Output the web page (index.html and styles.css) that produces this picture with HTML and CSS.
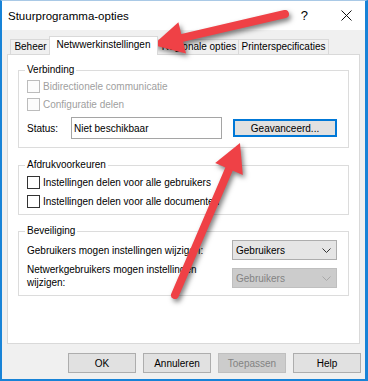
FILE: index.html
```html
<!DOCTYPE html>
<html>
<head>
<meta charset="utf-8">
<title>Stuurprogramma-opties</title>
<link rel="stylesheet" href="styles.css">
</head>
<body>

<div class="window">

  <div class="titlebar">
    <span class="caption">Stuurprogramma-opties</span>
    <span class="helpbtn">?</span>
    <span class="closebtn"><svg width="11" height="11" viewBox="0 0 11 11"><path d="M0.5 0.5L10.5 10.5M10.5 0.5L0.5 10.5"/></svg></span>
  </div>

  <div class="client">

    <div class="tabs">
      <div class="tab tab-beheer">Beheer</div>
      <div class="tab tab-netwerk active">Netwwerkinstellingen</div>
      <div class="tab tab-opties">Regionale opties</div>
      <div class="tab tab-printer">Printerspecificaties</div>
    </div>

    <div class="panel">

      <fieldset class="group group-verbinding">
        <legend>Verbinding</legend>
        <div class="check disabled"><span class="box"></span>Bidirectionele communicatie</div>
        <div class="check disabled"><span class="box"></span>Configuratie delen</div>
        <div class="status-row">
          <span class="status-label">Status:</span>
          <span class="edit">Niet beschikbaar</span>
          <span class="btn btn-default btn-adv">Geavanceerd...</span>
        </div>
      </fieldset>

      <fieldset class="group group-afdruk">
        <legend>Afdrukvoorkeuren</legend>
        <div class="check"><span class="box"></span>Instellingen delen voor alle gebruikers</div>
        <div class="check"><span class="box"></span>Instellingen delen voor alle documenten</div>
      </fieldset>

      <fieldset class="group group-beveiliging">
        <legend>Beveiliging</legend>
        <div class="sec-row">
          <span class="sec-label">Gebruikers mogen instellingen wijzigen:</span>
          <span class="select">Gebruikers<svg width="9" height="5" viewBox="0 0 9 5"><path d="M0.5 0.5L4.5 4.5L8.5 0.5"/></svg></span>
        </div>
        <div class="sec-row sec-row-2">
          <span class="sec-label">Netwerkgebruikers mogen instellingen<br>wijzigen:</span>
          <span class="select disabled">Gebruikers<svg width="9" height="5" viewBox="0 0 9 5"><path d="M0.5 0.5L4.5 4.5L8.5 0.5"/></svg></span>
        </div>
      </fieldset>

    </div>

    <div class="buttons">
      <span class="btn">OK</span>
      <span class="btn">Annuleren</span>
      <span class="btn disabled">Toepassen</span>
      <span class="btn">Help</span>
    </div>

  </div>
</div>

<!-- annotation arrows drawn over the dialog -->
<svg class="arrows" width="368" height="381" viewBox="0 0 368 381">
  <g class="arrow">
    <line x1="285" y1="14" x2="178" y2="38.9"/>
    <polygon points="153,45 178.4,22.3 186,53.5"/>
  </g>
  <g class="arrow">
    <line x1="175" y1="295" x2="230.6" y2="165.3"/>
    <polygon points="240,143 242.8,174.9 215.2,163.1"/>
  </g>
</svg>

</body>
</html>
```

FILE: styles.css
```css
  body          { margin: 0; font: 10px "Liberation Sans", Arial, sans-serif; color: #000; position: relative; width: 368px; height: 381px; overflow: hidden; }

  .window       { width: 368px; height: 381px; box-sizing: border-box; background: #f0f0f0;
                  border: 2px solid #1883d7; border-top: 1px solid #a9c9e6; border-right-width: 3px;
                  display: flex; flex-direction: column; }

  .titlebar     { height: 29px; background: #fff; display: flex; align-items: center; flex: none; }
  .caption      { font-size: 11.5px; padding-left: 6px; }
  .helpbtn      { margin-left: auto; font-size: 13px; }
  .closebtn     { margin-left: 33px; margin-right: 13px; display: flex; }
  .closebtn path { stroke: #111; stroke-width: 1; fill: none; }

  .client       { flex: 1; padding: 6px 4px 0 5px; }

  .tabs         { display: flex; align-items: flex-end; height: 18px; padding-left: 3px; }
  .tab          { height: 15px; box-sizing: border-box; border: 1px solid #d9d9d9; border-bottom: 0;
                  background: #f0f0f0; line-height: 14px; text-align: center; white-space: nowrap; overflow: hidden; }
  .tab.active   { height: 19px; margin: 0 -2px -1px; background: #fff; line-height: 16px; position: relative; z-index: 1; }
  .tab-beheer   { width: 41px; }
  .tab-netwerk  { width: 109px; }
  .tab-opties   { width: 83px; padding-left: 3px; }
  .tab-printer  { width: 91px; margin-left: -1px; }

  .panel        { width: 353px; height: 290px; box-sizing: border-box; background: #fff;
                  border: 1px solid #d9d9d9; padding: 8px 0 0 10px; }

  .group        { width: 331px; box-sizing: border-box; margin: 0; min-width: 0;
                  border: 1px solid #dcdcdc; padding: 0 11px 8px 8px; }
  .group legend { padding: 0 2px; margin-left: -2px; line-height: 14px; }
  .group-afdruk { margin-top: 10px; padding-top: 1px; padding-bottom: 3px; }
  .group-beveiliging { margin-top: 9px; padding-top: 2px; padding-bottom: 6px; }

  .check        { display: flex; align-items: center; height: 18px; white-space: nowrap; }
  .group-afdruk .check { height: 19px; }
  .check .box   { width: 13px; height: 13px; box-sizing: border-box; border: 1px solid #333; background: #fff; margin-right: 3px; flex: none; }
  .check.disabled      { color: #a0a0a0; }
  .check.disabled .box { border-color: #bcbcbc; background: #fcfcfc; }

  .status-row   { display: flex; align-items: center; height: 22px; margin-top: 4px; }
  .status-label { width: 44px; }
  .edit         { width: 151px; height: 22px; box-sizing: border-box; border: 1px solid #a5a5a5; background: #fff;
                  padding-left: 2px; display: flex; align-items: center; }

  .btn          { width: 68px; height: 20px; box-sizing: border-box; border: 1px solid #adadad; background: #e1e1e1;
                  display: flex; align-items: center; justify-content: center; }
  .btn.disabled { background: #cccccc; border-color: #bfbfbf; color: #838383; }
  .btn-default  { border-color: #0078d7; box-shadow: inset 0 0 0 1px #0078d7; }
  .btn-adv      { width: 104px; height: 18px; margin-left: 11px; }

  .sec-row      { display: flex; align-items: center; height: 20px; }
  .sec-row-2    { margin-top: 3px; height: auto; align-items: flex-start; }
  .sec-label    { line-height: 13px; white-space: nowrap; }
  .sec-row-2 .select { margin-top: 5px; }
  .select       { width: 105px; height: 20px; box-sizing: border-box; margin-left: auto; flex: none;
                  border: 1px solid #adadad; background: #e5e5e5; padding: 0 5px 0 3px;
                  display: flex; align-items: center; justify-content: space-between; }
  .select path  { stroke: #333; stroke-width: 1; fill: none; }
  .select.disabled      { background: #cccccc; border-color: #bfbfbf; color: #838383; }
  .select.disabled path { stroke: #a8a8a8; }

  .buttons      { display: flex; justify-content: flex-end; gap: 7px; margin-top: 9px; }

  .arrows       { position: absolute; left: 0; top: 0; pointer-events: none;
                  filter: drop-shadow(2px 3px 2.5px rgba(0, 0, 0, 0.5)); }
  .arrow line   { stroke: #ef4146; stroke-width: 8; stroke-linecap: round; }
  .arrow polygon { fill: #ef4146; }
```
